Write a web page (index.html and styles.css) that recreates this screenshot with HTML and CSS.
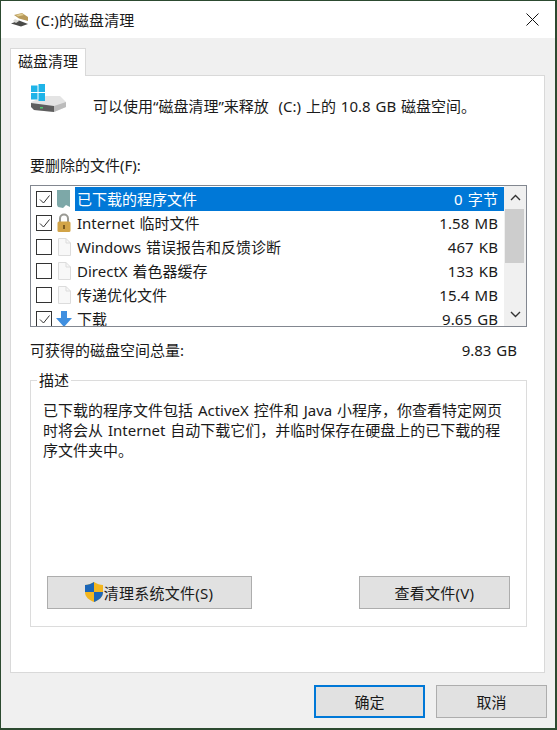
FILE: index.html
```html
<!DOCTYPE html>
<html lang="zh-CN">
<head>
<meta charset="utf-8">
<title>磁盘清理</title>
<link rel="stylesheet" href="styles.css">
</head>
<body>
<div class="window">
  <header class="titlebar">
    <svg class="title-icon" width="20" height="18" viewBox="0 0 20 18">
      <path d="M1 13.5 L9 10.5 L18 14 L11 16.5 Z" fill="#4a4a48"/>
      <path d="M3 11 L5 9 L9 11 L6 13 Z" fill="#d8d8d4"/>
      <path d="M4 5 L12 3 L18 7 L18 11 L9 8.5 Z" fill="#b89a5a"/>
      <path d="M6 5 L12 3.5 L14 5 L8 6.5 Z" fill="#e0cc90"/>
    </svg>
    <span class="title-text">(C:)的磁盘清理</span>
    <svg class="close" width="13" height="13" viewBox="0 0 13 13"><path d="M.5 .5 L12.5 12.5 M12.5 .5 L.5 12.5" stroke="#111" fill="none"/></svg>
  </header>
  <main class="body">
    <div class="tabs"><div class="tab">磁盘清理</div></div>
    <section class="panel">
      <div class="intro">
        <svg class="drive" width="38" height="30" viewBox="0 0 38 30">
          <path d="M1 18 L16 12 L30 12 L36 18 L36 23 L24 28 L4 26 L1 22 Z" fill="#e4e4e4"/>
          <path d="M1 19 L24 22 L24 28 L4 26 L1 23 Z" fill="#5e5e5e"/>
          <path d="M24 22 L36 18 L36 23 L24 28 Z" fill="#bcbcbc"/>
          <rect x="10" y="23" width="3" height="1.5" fill="#4fc870"/>
          <rect x="1" y="1.5" width="6.5" height="6.5" fill="#1fb4e8"/>
          <rect x="8.5" y="0" width="6.5" height="8" fill="#1fb4e8"/>
          <rect x="1" y="9" width="6.5" height="6.5" fill="#1fb4e8"/>
          <rect x="8.5" y="9" width="6.5" height="8" fill="#1fb4e8"/>
        </svg>
        <p class="intro-text">可以使用“磁盘清理”来释放&nbsp; (C:) 上的 10.8 GB 磁盘空间。</p>
      </div>
      <label class="list-label">要删除的文件(F):</label>
      <div class="listbox">
        <ul class="rows">
          <li class="row">
            <span class="check on"><svg width="13" height="13" viewBox="0 0 13 13"><path d="M2 6.5 L5.5 10 L11.5 2.5" fill="none" stroke="#333" stroke-width="1"/></svg></span>
            <svg class="ico" width="16" height="20" viewBox="0 0 16 20"><path d="M1 1 H14 V18 L10 16 L7 19 L2 18 L1 16 Z" fill="#7da8a8"/></svg>
            <span class="name sel">已下载的程序文件<span class="size">0 字节</span></span>
          </li>
          <li class="row">
            <span class="check on"><svg width="13" height="13" viewBox="0 0 13 13"><path d="M2 6.5 L5.5 10 L11.5 2.5" fill="none" stroke="#333" stroke-width="1"/></svg></span>
            <svg class="ico" width="16" height="20" viewBox="0 0 16 20"><path d="M4 9 V5.5 A4 4 0 0 1 12 5.5 V9" fill="none" stroke="#9a9a94" stroke-width="2"/><rect x="1.5" y="8.5" width="13" height="10.5" rx="1.5" fill="#d2a448"/><rect x="7" y="12" width="2" height="4" fill="#7a5a20"/></svg>
            <span class="name">Internet 临时文件<span class="size">1.58 MB</span></span>
          </li>
          <li class="row">
            <span class="check"></span>
            <svg class="ico" width="16" height="20" viewBox="0 0 16 20"><path d="M2.5 1.5 H10 L14.5 6 V18.5 H2.5 Z" fill="#f8f8f8" stroke="#dcdcdc"/><path d="M10 1.5 V6 H14.5" fill="none" stroke="#dcdcdc"/></svg>
            <span class="name">Windows 错误报告和反馈诊断<span class="size">467 KB</span></span>
          </li>
          <li class="row">
            <span class="check"></span>
            <svg class="ico" width="16" height="20" viewBox="0 0 16 20"><path d="M2.5 1.5 H10 L14.5 6 V18.5 H2.5 Z" fill="#f8f8f8" stroke="#dcdcdc"/><path d="M10 1.5 V6 H14.5" fill="none" stroke="#dcdcdc"/></svg>
            <span class="name">DirectX 着色器缓存<span class="size">133 KB</span></span>
          </li>
          <li class="row">
            <span class="check"></span>
            <svg class="ico" width="16" height="20" viewBox="0 0 16 20"><path d="M2.5 1.5 H10 L14.5 6 V18.5 H2.5 Z" fill="#f8f8f8" stroke="#dcdcdc"/><path d="M10 1.5 V6 H14.5" fill="none" stroke="#dcdcdc"/></svg>
            <span class="name">传递优化文件<span class="size">15.4 MB</span></span>
          </li>
          <li class="row">
            <span class="check on"><svg width="13" height="13" viewBox="0 0 13 13"><path d="M2 6.5 L5.5 10 L11.5 2.5" fill="none" stroke="#333" stroke-width="1"/></svg></span>
            <svg class="ico" width="16" height="20" viewBox="0 0 16 20"><path d="M5 2 H11 V9 H16 L8 18 L0 9 H5 Z" fill="#3f8fe0"/></svg>
            <span class="name">下载<span class="size">9.65 GB</span></span>
          </li>
        </ul>
        <div class="scrollbar">
          <svg class="arrow" width="11" height="7" viewBox="0 0 11 7"><path d="M1 6 L5.5 1.5 L10 6" fill="none" stroke="#333" stroke-width="1.4"/></svg>
          <div class="track"><div class="thumb"></div></div>
          <svg class="arrow" width="11" height="7" viewBox="0 0 11 7"><path d="M1 1 L5.5 5.5 L10 1" fill="none" stroke="#333" stroke-width="1.4"/></svg>
        </div>
      </div>
      <div class="total"><span>可获得的磁盘空间总量:</span><span>9.83 GB</span></div>
      <fieldset class="group">
        <legend class="legend">描述</legend>
        <p class="desc">已下载的程序文件包括 ActiveX 控件和 Java 小程序，你查看特定网页时将会从 Internet 自动下载它们，并临时保存在硬盘上的已下载的程序文件夹中。</p>
        <div class="group-actions">
          <button class="btn wide">
            <svg class="shield" width="20" height="22" viewBox="0 0 20 22"><path d="M10 1 C13 3 16 4 19 4 V11 C19 16 15 19 10 21 C5 19 1 16 1 11 V4 C4 4 7 3 10 1 Z" fill="#f3b61f"/><path d="M10 1 V11 H1 V4 C4 4 7 3 10 1 Z" fill="#1c66b8"/><path d="M10 11 H19 C19 16 15 19 10 21 Z" fill="#1c66b8"/></svg>
            <span>清理系统文件(S)</span>
          </button>
          <button class="btn view">查看文件(V)</button>
        </div>
      </fieldset>
    </section>
    <footer class="footer">
      <button class="btn action primary">确定</button>
      <button class="btn action">取消</button>
    </footer>
  </main>
</div>
</body>
</html>
```
FILE: styles.css
```css
* { box-sizing: border-box; }
html, body { margin: 0; padding: 0; }
body {
  width: 557px;
  height: 730px;
  font-family: "Noto Sans", "Noto Sans CJK SC", sans-serif;
  font-size: 15px;
  color: #1a1a1a;
  word-spacing: 1px;
  overflow: hidden;
}
.window {
  width: 557px;
  height: 730px;
  border: 1px solid #2c4a30;
  border-right-width: 2px;
  border-bottom-width: 2px;
  display: flex;
  flex-direction: column;
  background: #f0f0f0;
}
.titlebar {
  height: 37px;
  flex: none;
  background: #fff;
  display: flex;
  align-items: center;
  padding: 0 0 0 9px;
}
.title-icon { margin-right: 6px; margin-top: -2px; }
.title-text { flex: 1; margin-top: -1px; letter-spacing: .1px; }
.close { margin-right: 16px; margin-top: -1px; }
.body {
  flex: 1;
  display: flex;
  flex-direction: column;
  padding: 10px 10px 0 9px;
}
.tabs { height: 27px; flex: none; display: flex; align-items: flex-end; }
.tab {
  width: 76px;
  height: 28px;
  margin-bottom: -1px;
  background: #fff;
  border: 1px solid #d9d9d9;
  border-bottom: none;
  text-align: center;
  line-height: 25px;
  position: relative;
  z-index: 1;
}
.panel {
  height: 598px;
  flex: none;
  background: #fff;
  border: 1px solid #d9d9d9;
  padding: 8px 17px 0 19px;
  display: flex;
  flex-direction: column;
}
.intro { height: 50px; display: flex; align-items: flex-start; flex: none; }
.drive { margin-right: 25px; flex: none; }
.intro-text { margin: 12px 0 0; line-height: 20px; white-space: nowrap; }
.list-label { margin-top: 21px; height: 20px; line-height: 20px; flex: none; }
.listbox {
  margin-top: 10px;
  height: 142px;
  flex: none;
  border: 1px solid #828790;
  display: flex;
  overflow: hidden;
  background: #fff;
}
.rows { list-style: none; margin: 0; padding: 1px 0 0; flex: 1; min-width: 0; }
.row { height: 24px; display: flex; align-items: center; padding-left: 5px; }
.check {
  width: 16px;
  height: 16px;
  border: 1px solid #333;
  flex: none;
  display: flex;
  align-items: center;
  justify-content: center;
  background: #fff;
}
.ico { margin-left: 4px; flex: none; }
.name {
  margin-left: 3px;
  flex: 1;
  height: 24px;
  line-height: 24px;
  display: flex;
  justify-content: space-between;
  padding: 0 6px 0 2px;
  white-space: nowrap;
}
.size { letter-spacing: .1px; }
.sel { background: #0078d7; color: #fff; }
.scrollbar {
  width: 22px;
  flex: none;
  background: #f0f0f0;
  display: flex;
  flex-direction: column;
  align-items: center;
}
.arrow { flex: none; margin: 8px 0; }
.track { flex: 1; width: 100%; }
.thumb { width: 19px; height: 54px; margin-left: 1px; background: #cdcdcd; }
.total {
  margin-top: 13px;
  height: 20px;
  line-height: 20px;
  flex: none;
  display: flex;
  justify-content: space-between;
  padding-right: 10px;
}
.group {
  margin: 10px 0 0;
  padding: 0 12px;
  width: 497px;
  height: 257px;
  flex: none;
  border: 1px solid #dcdcdc;
  display: flex;
  flex-direction: column;
}
.legend { margin-left: -6px; padding: 0 2px; line-height: 20px; }
.desc { margin: 10px 0 0; width: 462px; line-height: 20px; }
.group-actions {
  margin-top: 116px;
  display: flex;
  justify-content: space-between;
  padding: 0 4px;
}
.btn {
  height: 33px;
  border: 1px solid #adadad;
  background: #e1e1e1;
  font: inherit;
  color: #1a1a1a;
  padding: 0;
  display: flex;
  align-items: center;
  justify-content: center;
}
.wide, .view { letter-spacing: .25px; padding-bottom: 1px; }
.wide { width: 205px; }
.shield { margin-left: -2px; }
.view { width: 151px; }
.footer {
  flex: 1;
  display: flex;
  justify-content: flex-end;
  gap: 11px;
  padding-top: 12px;
  margin-right: -2px;
}
.action { width: 111px; }
.primary { border: 2px solid #0078d7; }
```
